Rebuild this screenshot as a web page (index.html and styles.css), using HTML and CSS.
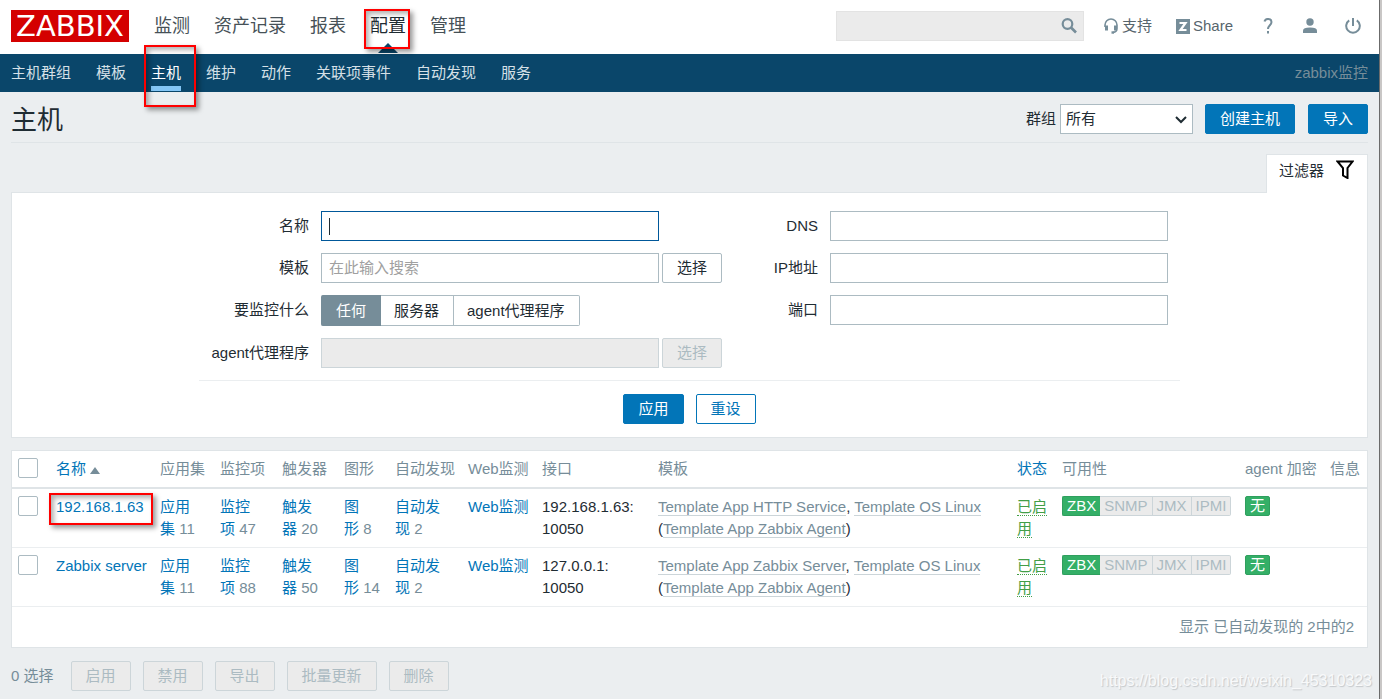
FILE: index.html
```html
<!DOCTYPE html>
<html lang="zh-CN">
<head>
<meta charset="utf-8">
<title>主机</title>
<link rel="stylesheet" href="styles.css">
</head>
<body>
<div class="page">
  <header class="top">
    <a class="logo" href="#">ZABBIX</a>
    <nav class="main-nav">
      <a href="#">监测</a>
      <a href="#">资产记录</a>
      <a href="#">报表</a>
      <a href="#" class="current">配置<span class="mark mark-config"></span></a>
      <a href="#">管理</a>
    </nav>
    <div class="tools">
      <form class="search">
        <input type="text" aria-label="搜索">
        <button type="button" aria-label="搜索">
          <svg width="16" height="16" viewBox="0 0 16 16" fill="none" stroke="#768d99"><circle cx="6.500" cy="6" r="4.800" stroke-width="2.200"/><path d="M10 9.500l5 5" stroke-width="2.600"/></svg>
        </button>
      </form>
      <a href="#" class="support"><svg width="14" height="16" viewBox="0 0 14 16" fill="none" stroke="#768d99"><path d="M1 9V7a6 6 0 0 1 12 0v3.500q0 3.500-4 4" stroke-width="1.600"/><path d="M2.500 7.500v5M11.500 7.500v5" stroke-width="3"/><path d="M7.500 14.500h2.500" stroke-width="2.400"/></svg>支持</a>
      <a href="#" class="share"><svg width="16" height="15" viewBox="0 0 16 15"><path fill="#768d99" d="M1 0h14v15H1z"/><path d="M4.500 4h6L5.500 11h6" fill="none" stroke="#fff" stroke-width="2.200"/></svg>Share</a>
      <a href="#" class="help" aria-label="帮助"><svg width="10" height="16" viewBox="0 0 10 16" fill="none" stroke="#768d99" stroke-width="2"><path d="M1.500 3.500C2.500-.2 8.500.4 8.500 4 8.500 7 5 7.500 5 11M5 13v2.500"/></svg></a>
      <a href="#" class="user" aria-label="用户"><svg width="16" height="16" viewBox="0 0 16 16" fill="#768d99"><circle cx="8" cy="4" r="3.700"/><path d="M1 15v-2.500Q1 9.500 8 9.500t7 3V15z"/></svg></a>
      <a href="#" class="power" aria-label="退出"><svg width="16" height="16" viewBox="0 0 16 16" fill="none" stroke="#768d99" stroke-width="2"><path d="M4.200 2.300a6.800 6.800 0 1 0 7.600 0M8 0v8"/></svg></a>
    </div>
  </header>
  <nav class="sub-nav">
    <a href="#">主机群组</a>
    <a href="#">模板</a>
    <a href="#" class="current">主机<span class="mark mark-hosts"></span></a>
    <a href="#">维护</a>
    <a href="#">动作</a>
    <a href="#">关联项事件</a>
    <a href="#">自动发现</a>
    <a href="#">服务</a>
    <span class="server">zabbix监控</span>
  </nav>
  <main>
    <div class="title">
      <h1>主机</h1>
      <label for="group">群组</label>
      <div class="select"><select id="group"><option>所有</option></select><svg width="12" height="8" viewBox="0 0 12 8" fill="none" stroke="#1f2c33" stroke-width="2"><path d="M1 1l5 5 5-5"/></svg></div>
      <button type="button" class="btn primary">创建主机</button>
      <button type="button" class="btn primary">导入</button>
    </div>
    <div class="tab-row">
      <button type="button" class="tab">过滤器<svg width="18" height="19" viewBox="0 0 18 19" fill="none" stroke="#000" stroke-width="2"><path d="M1.500 1.500h15L11.500 8v10L7 15.500V8z"/></svg></button>
    </div>
    <form class="filter">
      <div class="fields">
        <label for="name">名称</label>
        <div class="field"><input id="name" class="text focus" type="text"><span class="caret"></span></div>
        <label for="dns">DNS</label>
        <input id="dns" class="text" type="text">

        <label for="tpl">模板</label>
        <div class="field"><input id="tpl" class="text" type="text" placeholder="在此输入搜索"><button type="button" class="btn plain">选择</button></div>
        <label for="ip">IP地址</label>
        <input id="ip" class="text" type="text">

        <span class="label">要监控什么</span>
        <div class="segments">
          <label><input type="radio" name="by" checked>任何</label>
          <label><input type="radio" name="by">服务器</label>
          <label><input type="radio" name="by">agent代理程序</label>
        </div>
        <label for="port">端口</label>
        <input id="port" class="text" type="text">

        <label for="proxy">agent代理程序</label>
        <div class="field"><input id="proxy" class="text" type="text" disabled><button type="button" class="btn" disabled>选择</button></div>
      </div>
      <div class="actions">
        <button type="button" class="btn primary">应用</button>
        <button type="button" class="btn outline">重设</button>
      </div>
    </form>
    <table class="hosts">
      <colgroup><col class="c-check"><col class="c-name"><col class="c-app"><col class="c-item"><col class="c-trig"><col class="c-graph"><col class="c-disc"><col class="c-web"><col class="c-if"><col><col class="c-state"><col class="c-avail"><col class="c-enc"><col class="c-info"></colgroup>
      <thead>
        <tr>
          <th><input type="checkbox" aria-label="全选"></th>
          <th><a href="#">名称<span class="sort"></span></a></th>
          <th>应用集</th><th>监控项</th><th>触发器</th><th>图形</th><th>自动发现</th><th>Web监测</th><th>接口</th><th>模板</th>
          <th><a href="#">状态</a></th><th>可用性</th><th>agent 加密</th><th>信息</th>
        </tr>
      </thead>
      <tbody>
        <tr>
          <td><input type="checkbox" aria-label="192.168.1.63"></td>
          <td><a href="#" class="host">192.168.1.63<span class="mark mark-ip"></span></a></td>
          <td><a href="#">应用<br>集</a> <i>11</i></td>
          <td><a href="#">监控<br>项</a> <i>47</i></td>
          <td><a href="#">触发<br>器</a> <i>20</i></td>
          <td><a href="#">图<br>形</a> <i>8</i></td>
          <td><a href="#">自动发<br>现</a> <i>2</i></td>
          <td><a href="#">Web监测</a></td>
          <td>192.168.1.63:<br>10050</td>
          <td><a href="#" class="tpl">Template App HTTP Service</a>, <a href="#" class="tpl">Template OS Linux</a><br>(<a href="#" class="tpl">Template App Zabbix Agent</a>)</td>
          <td><a href="#" class="on">已启<br>用</a></td>
          <td><div class="badges"><span class="good">ZBX</span><span>SNMP</span><span>JMX</span><span>IPMI</span></div></td>
          <td><div class="badges"><span class="good">无</span></div></td>
          <td></td>
        </tr>
        <tr>
          <td><input type="checkbox" aria-label="Zabbix server"></td>
          <td><a href="#" class="host">Zabbix server</a></td>
          <td><a href="#">应用<br>集</a> <i>11</i></td>
          <td><a href="#">监控<br>项</a> <i>88</i></td>
          <td><a href="#">触发<br>器</a> <i>50</i></td>
          <td><a href="#">图<br>形</a> <i>14</i></td>
          <td><a href="#">自动发<br>现</a> <i>2</i></td>
          <td><a href="#">Web监测</a></td>
          <td>127.0.0.1:<br>10050</td>
          <td><a href="#" class="tpl">Template App Zabbix Server</a>, <a href="#" class="tpl">Template OS Linux</a><br>(<a href="#" class="tpl">Template App Zabbix Agent</a>)</td>
          <td><a href="#" class="on">已启<br>用</a></td>
          <td><div class="badges"><span class="good">ZBX</span><span>SNMP</span><span>JMX</span><span>IPMI</span></div></td>
          <td><div class="badges"><span class="good">无</span></div></td>
          <td></td>
        </tr>
      </tbody>
      <tfoot><tr><td colspan="14">显示 已自动发现的 2中的2</td></tr></tfoot>
    </table>
    <div class="bulk">
      <span>0 选择</span>
      <button type="button" class="btn" disabled>启用</button>
      <button type="button" class="btn" disabled>禁用</button>
      <button type="button" class="btn" disabled>导出</button>
      <button type="button" class="btn" disabled>批量更新</button>
      <button type="button" class="btn" disabled>删除</button>
    </div>
  </main>
  <div class="watermark">https://blog.csdn.net/weixin_45310323</div>
</div>
</body>
</html>
```
FILE: styles.css
```css
* { box-sizing: border-box; }
html { background: #c9c7c6; }
body {
  margin: 0;
  padding-right: 2px;
  font: 15px/22px "Liberation Sans", "Noto Sans CJK SC", sans-serif;
  color: #1f2c33;
}
.page {
  position: relative;
  min-height: 100vh;
  background: #ebeef0;
  border-right: 1px solid #6b6b6b;
  overflow: hidden;
}
a { color: #0275b8; text-decoration: none; }
svg { display: block; flex: none; }
input, button, select { font: inherit; color: inherit; margin: 0; }

.top {
  display: flex;
  align-items: center;
  height: 54px;
  padding: 0 18px 2px 11px;
  background: #fff;
}
.logo {
  width: 118px;
  height: 32px;
  background: #d40000;
  color: #fff;
  font: 29px/32px "DejaVu Sans", sans-serif;
  text-align: center;
}
.main-nav { display: flex; gap: 24px; margin-left: 25px; font-size: 18px; line-height: 54px; }
.main-nav a { position: relative; color: #465157; }
.main-nav .current { color: #1f2c33; }
.main-nav .current::after {
  content: "";
  position: absolute;
  left: 8px;
  bottom: 0;
  border: 10px solid transparent;
  border-top: 0;
  border-bottom-color: #0a466a;
}
.mark {
  position: absolute;
  z-index: 2;
  border: 2px solid #f00;
  box-shadow: 3px 3px 5px rgba(0, 0, 0, .4), inset 3px 3px 5px rgba(0, 0, 0, .3);
  pointer-events: none;
}
.mark-config { inset: 10px -4px 4px -6px; }
.mark-hosts { inset: -9px -15px -15px -7px; }
.mark-ip { inset: -5px -9px -10px -7px; }

.tools { display: flex; align-items: center; margin-left: auto; }
.tools a { display: flex; align-items: center; gap: 4px; color: #57656d; }
.search { position: relative; width: 248px; margin-right: 20px; }
.search input { width: 100%; height: 30px; border: 1px solid #e3e3e3; background: #ebebeb; padding: 0 34px 0 8px; display: block; }
.search button { position: absolute; right: 7px; top: 7px; padding: 0; border: 0; background: none; }
.share { margin-left: 23px; }
.share svg { margin-right: -2px; }
.help { margin-left: 30px; }
.user { margin-left: 29px; }
.power { margin-left: 27px; }

.sub-nav { display: flex; gap: 25px; height: 38px; padding: 0 11px; background: #0a466a; line-height: 38px; }
.sub-nav a { position: relative; color: #d5e0e7; }
.sub-nav .current { color: #fff; }
.sub-nav .current::after { content: ""; position: absolute; left: 0; right: 0; bottom: 1px; height: 5px; background: #84c6f5; }
.server { margin-left: auto; color: #768d99; }

main { padding: 0 11px; }
.title { display: flex; align-items: center; height: 51px; padding-bottom: 1px; padding-top: 4px; border-bottom: 1px solid #dfe4e7; }
h1 { margin: 0 auto 0 0; padding-top: 2px; font-size: 26px; font-weight: 400; line-height: 36px; }
.select { position: relative; width: 133px; margin: 0 12px 0 4px; }
.select select { appearance: none; width: 100%; height: 30px; display: block; padding: 0 5px; border: 1px solid #acbbc2; border-radius: 0; background: #fff; }
.select svg { position: absolute; right: 6px; top: 12px; pointer-events: none; }
.btn {
  height: 30px;
  padding: 0 14px;
  border: 1px solid #0275b8;
  border-radius: 2px;
  line-height: 28px;
  white-space: nowrap;
}
.primary { background: #0275b8; color: #fff; }
.primary + .outline { margin-left: 12px; }
.primary + .primary { margin-left: 13px; }
.outline { background: #fff; color: #0275b8; }
.plain { background: #fff; border-color: #acbbc2; }
.btn:disabled { background: #ebebeb; border-color: #ccd5d9; color: #acbbc2; }

.tab-row { display: flex; justify-content: flex-end; padding-top: 11px; }
.tab {
  position: relative;
  display: flex;
  gap: 12px;
  height: 39px;
  margin-bottom: -1px;
  padding: 5px 13px 0 12px;
  border: 1px solid #dfe4e7;
  border-bottom: 0;
  background: #fff;
}
.filter { border: 1px solid #dfe4e7; background: #fff; padding: 18px 0 13px; }
.fields {
  display: grid;
  grid-template-columns: 98px 401px 84px 338px;
  gap: 12px;
  width: 981px;
  margin: 0 auto;
  padding: 0 12px 12px;
  border-bottom: 1px solid #ebeef0;
  line-height: 30px;
}
.fields > label, .label { text-align: right; white-space: nowrap; }
.field { position: relative; display: flex; gap: 3px; height: 30px; }
.text { width: 338px; height: 30px; padding: 0 7px; border: 1px solid #acbbc2; border-radius: 0; background: #fff; }
.text::placeholder { color: #a0a0a0; }
.text:disabled { background: #ebebeb; border-color: #ccd5d9; }
.focus { border-color: #00589a; }
.caret { position: absolute; left: 8px; top: 7px; width: 1px; height: 17px; background: #1f2c33; }
.segments { display: flex; height: 31px; }
.segments label { position: relative; padding: 0 14px 0 13px; border: 1px solid #acbbc2; border-left: 0; background: #fff; line-height: 29px; }
.segments label:first-child { padding: 0 14px 0 15px; border-color: #768d99; border-radius: 2px 0 0 2px; background: #768d99; color: #fff; }
.segments label:last-child { border-radius: 0 2px 2px 0; }
.segments input { position: absolute; inset: 0; opacity: 0; }
.actions { display: flex; justify-content: center; margin-top: 13px; }

.hosts { width: 100%; margin-top: 12px; border-collapse: separate; border-spacing: 0; table-layout: fixed; border: 1px solid #dfe4e7; background: #fff; }
.c-check { width: 37px; }
.c-name { width: 104px; }
.c-app { width: 60px; }
.c-item { width: 62px; }
.c-trig { width: 62px; }
.c-graph { width: 51px; }
.c-disc { width: 73px; }
.c-web { width: 74px; }
.c-if { width: 116px; }
.c-state { width: 45px; }
.c-avail { width: 183px; }
.c-enc { width: 85px; }
.c-info { width: 44px; }
th, td { padding: 7px; text-align: left; vertical-align: top; white-space: nowrap; }
th { color: #768d99; font-weight: 400; border-bottom: 2px solid #dfe4e7; }
tbody td { border-bottom: 1px solid #ebeef0; }
th:first-child, tbody td:first-child { padding-left: 6px; }
td i { font-style: normal; color: #768d99; }
.hosts input { appearance: none; display: block; width: 20px; height: 20px; border: 1px solid #acbbc2; border-radius: 2px; background: #fff; }
.sort { display: inline-block; margin-left: 4px; border: 5px solid transparent; border-top: 0; border-bottom: 7px solid #768d99; }
.host { position: relative; }
.tpl { color: #768d99; border-bottom: 1px solid #ccd5d9; }
.on { color: #429e47; border-bottom: 1px dotted #429e47; }
.badges { display: flex; line-height: 18px; }
.badges span { padding: 0 4px; border: 1px solid #ccd5d9; border-left-width: 0; background: #ebebeb; color: #acbbc2; }
.badges .good { border: 1px solid #2f9f5e; border-right-width: 0; background: #34af67; color: #fff; }
.badges span:first-child { border-radius: 2px 0 0 2px; }
.badges span:last-child { border-radius: 0 2px 2px 0; }
.badges .good:only-child { border-right-width: 1px; border-radius: 2px; }
tfoot td { padding: 9px 13px; text-align: right; color: #768d99; }
.bulk { display: flex; align-items: center; gap: 12px; padding: 13px 0 8px; }
.bulk span { margin-right: 5px; color: #768d99; }
.watermark { position: absolute; right: 7px; bottom: 7px; font-size: 16px; color: #f8f9fa; text-shadow: 1px 1px 1px #c4c8cb; }
```
